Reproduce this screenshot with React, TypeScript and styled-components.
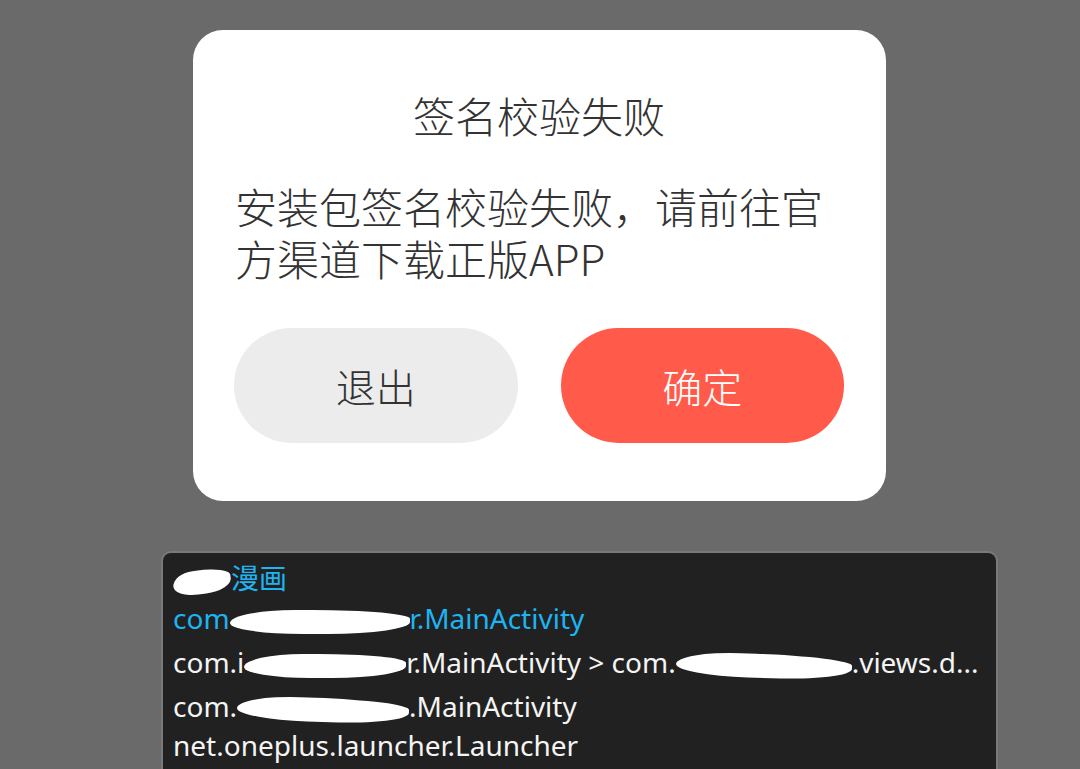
import React from "react";
import styled, { createGlobalStyle } from "styled-components";

const Global = createGlobalStyle`
  html, body { margin: 0; padding: 0; }
  body {
    width: 1080px;
    height: 769px;
    overflow: hidden;
    background: #6a6a6a;
    font-family: "Noto Sans CJK SC", "Noto Sans", sans-serif;
  }
`;

const Screen = styled.div`
  width: 1080px;
  height: 769px;
  display: flex;
  flex-direction: column;
  align-items: flex-start;
  padding-top: 30px;
  box-sizing: border-box;
`;

const Dialog = styled.div`
  margin-left: 193px;
  width: 693px;
  height: 471px;
  box-sizing: border-box;
  background: #ffffff;
  border-radius: 30px;
  padding: 0 42px 58px 41px;
  display: flex;
  flex-direction: column;
`;

const Title = styled.div`
  margin-top: 59px;
  text-align: center;
  font-size: 42px;
  line-height: 52px;
  color: #333333;
  font-weight: 300;
`;

const Body = styled.div`
  margin-top: 39px;
  padding-left: 1px;
  font-size: 42px;
  line-height: 52px;
  color: #333333;
  font-weight: 300;
`;

const Buttons = styled.div`
  margin-top: auto;
  display: flex;
  gap: 43px;
`;

const Btn = styled.div<{ $primary?: boolean }>`
  flex: 1;
  height: 115px;
  border-radius: 58px;
  display: flex;
  align-items: center;
  justify-content: center;
  font-size: 40px;
  font-weight: 300;
  background: ${(p) => (p.$primary ? "#ff5a4a" : "#ececec")};
  color: ${(p) => (p.$primary ? "#ffffff" : "#333333")};
`;

const Panel = styled.div`
  margin-top: 50px;
  margin-left: 161px;
  width: 837px;
  flex: 1;
  box-sizing: border-box;
  background: #212121;
  border: 2px solid #7a7a7a;
  border-bottom: none;
  border-radius: 10px 10px 0 0;
  padding: 4px 8px 0 10px;
  font-family: "Noto Sans", "Noto Sans CJK SC", sans-serif;
  font-size: 28px;
  color: #f4f4f4;
  overflow: hidden;
`;

const Line = styled.div<{ $blue?: boolean; $h: number }>`
  height: ${(p) => p.$h}px;
  line-height: ${(p) => p.$h}px;
  white-space: nowrap;
  color: ${(p) => (p.$blue ? "#1eb4f2" : "#f4f4f4")};
`;

const Redact = styled.span<{ $w: number; $tilt?: number }>`
  display: inline-block;
  width: ${(p) => p.$w}px;
  height: 24px;
  vertical-align: middle;
  background: #ffffff;
  border-radius: 40% 60% 50% 45% / 60% 40% 55% 50%;
  transform: rotate(${(p) => p.$tilt ?? 0}deg);
`;

export default function App() {
  return (
    <>
      <Global />
      <Screen>
        <Dialog>
          <Title>签名校验失败</Title>
          <Body>安装包签名校验失败，请前往官方渠道下载正版APP</Body>
          <Buttons>
            <Btn>退出</Btn>
            <Btn $primary>确定</Btn>
          </Buttons>
        </Dialog>
        <Panel>
          <Line $blue $h={42}>
            <Redact $w={58} $tilt={-8} />漫画
          </Line>
          <Line $blue $h={38}>
            com<Redact $w={180} />r.MainActivity
          </Line>
          <Line $h={50}>
            com.i<Redact $w={162} />r.MainActivity &gt; com.<Redact $w={176} $tilt={2} />.views.d...
          </Line>
          <Line $h={38}>
            com.<Redact $w={172} $tilt={2} />.MainActivity
          </Line>
          <Line $h={40}>net.oneplus.launcher.Launcher</Line>
        </Panel>
      </Screen>
    </>
  );
}
